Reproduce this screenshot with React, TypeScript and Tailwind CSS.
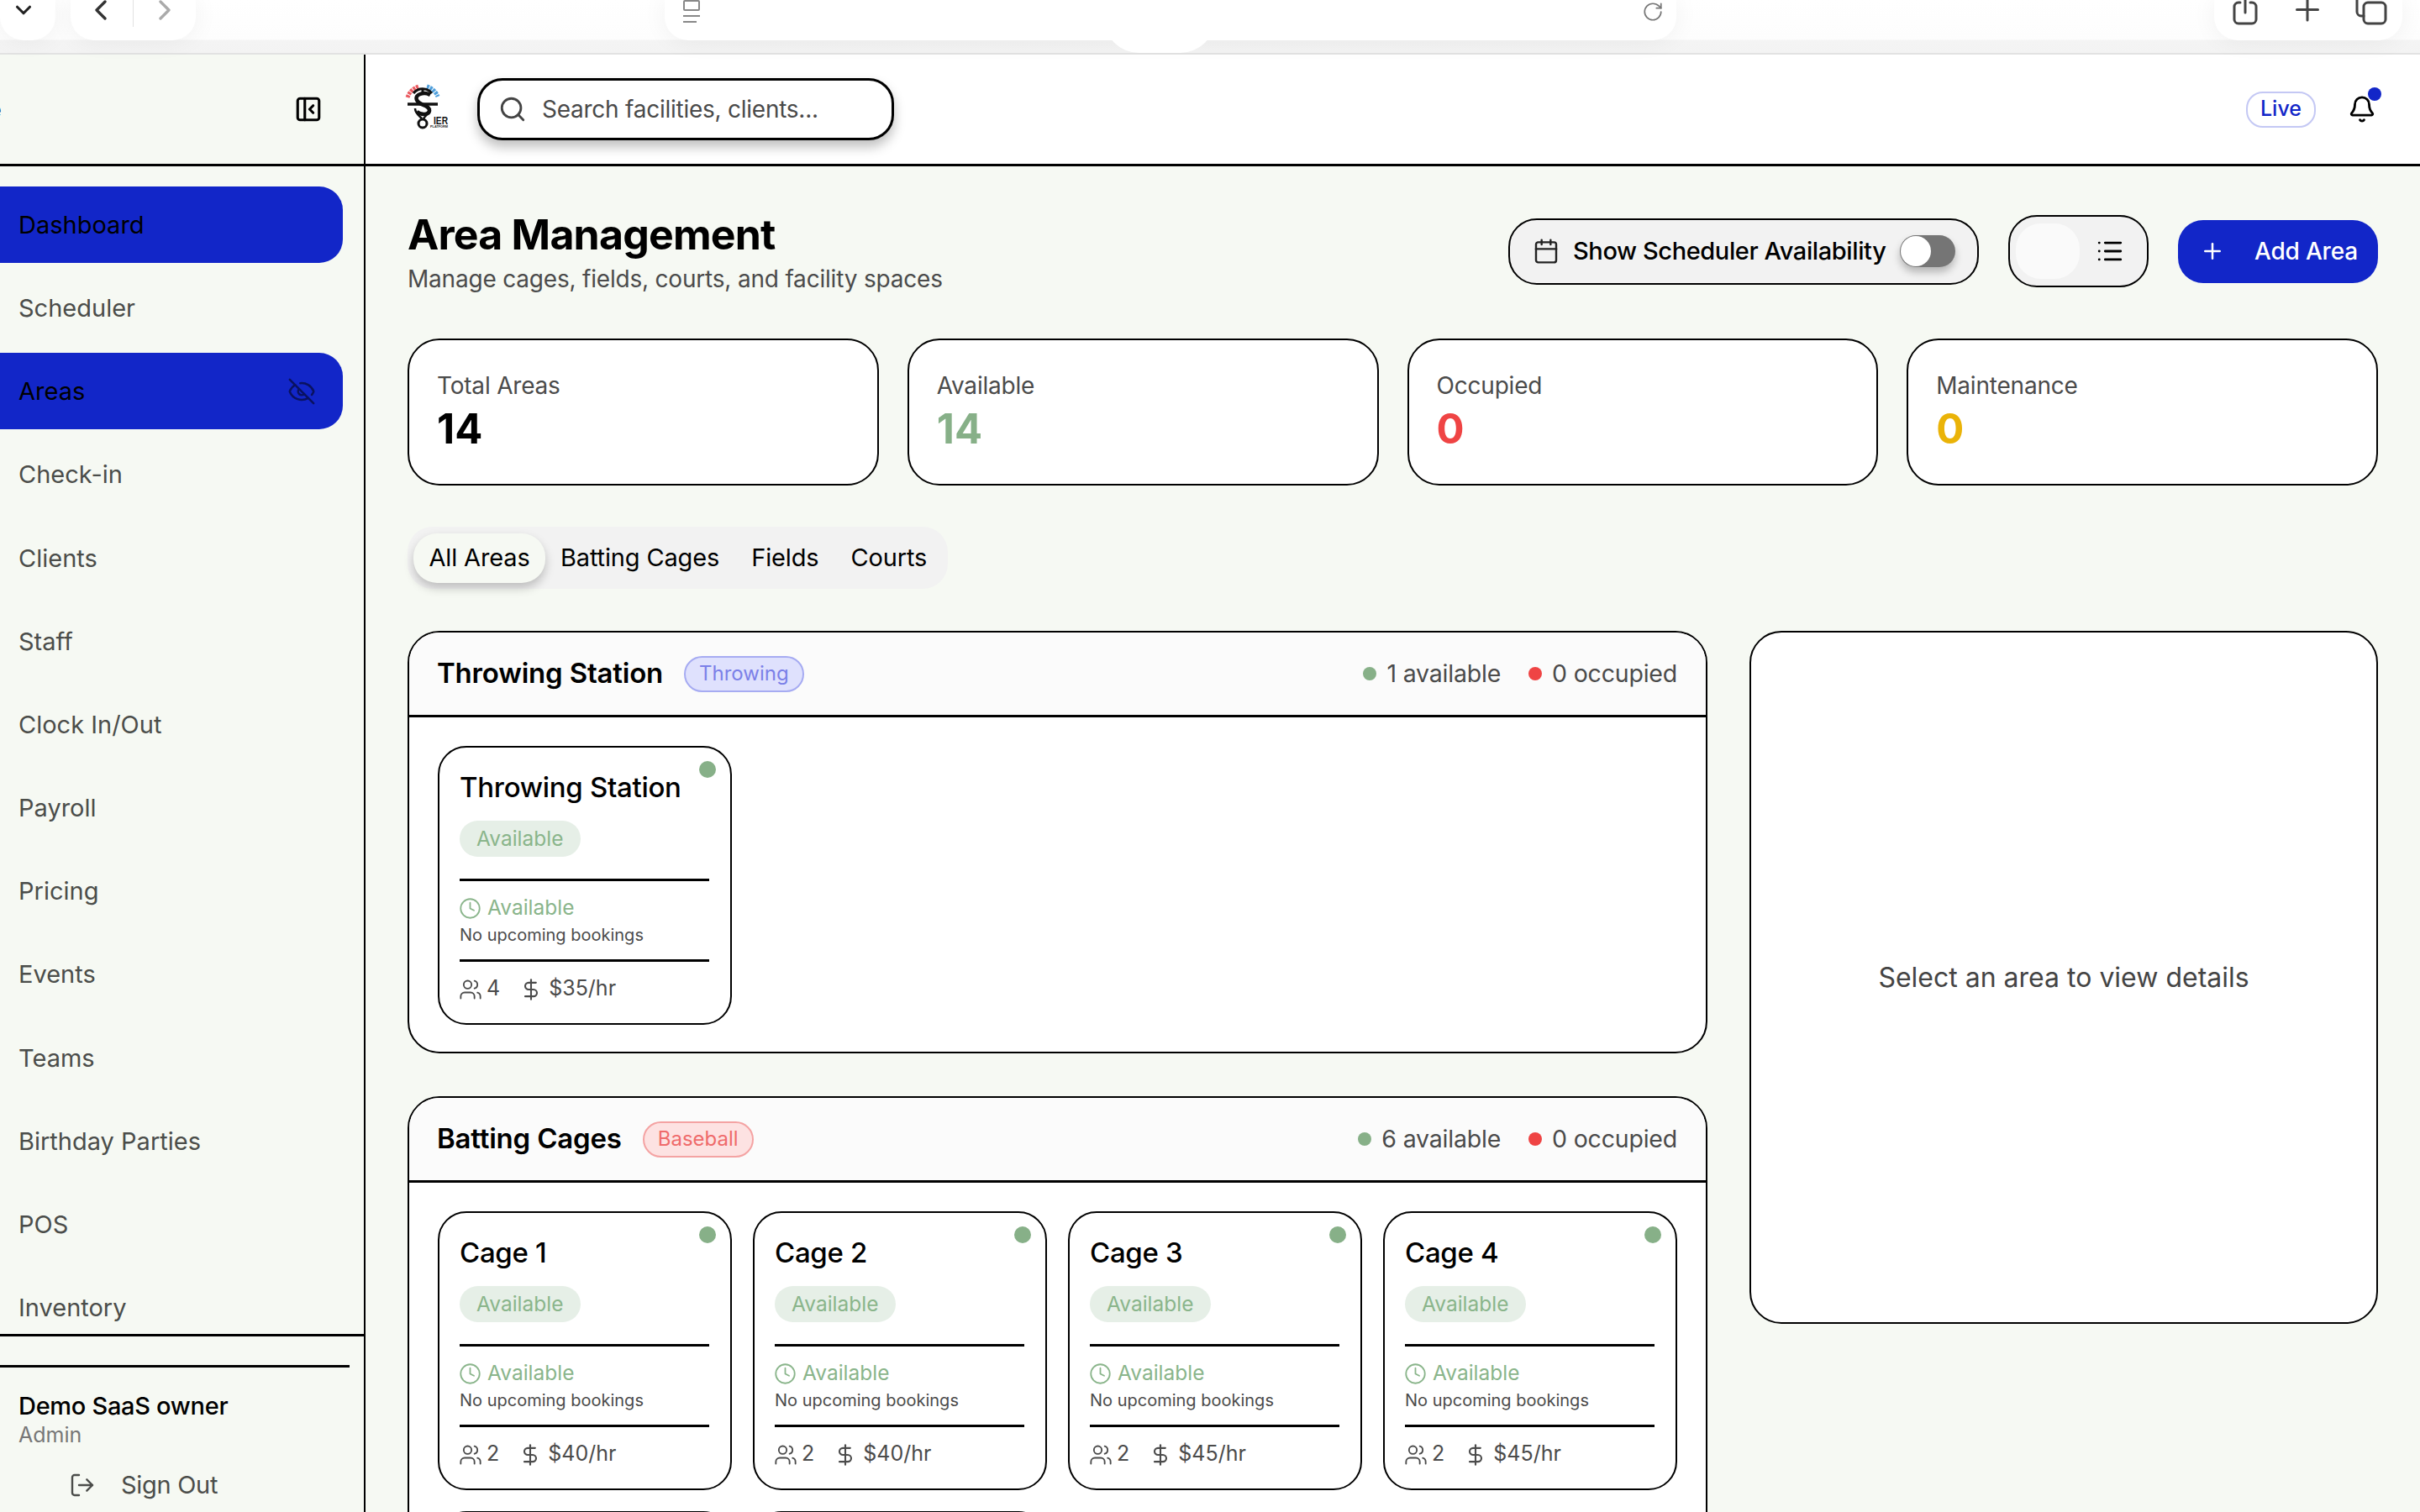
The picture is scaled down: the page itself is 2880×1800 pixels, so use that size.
import React from "react";
import {
  Bell, Calendar, ChevronDown, ChevronLeft, ChevronRight, Clock, DollarSign, EyeOff, List,
  LogOut, PanelLeftClose, Plus, RotateCw, Search, Users,
} from "lucide-react";

const navItems = ["Dashboard", "Scheduler", "Areas", "Check-in", "Clients", "Staff", "Clock In/Out", "Payroll", "Pricing", "Events", "Teams", "Birthday Parties", "POS", "Inventory"];

function Logo() {
  return (
    <svg width="70" height="70" viewBox="0 0 70 70" className="shrink-0 -mt-[12px]">
      <path d="M10 27 A20 20 0 0 1 23 14" fill="none" stroke="#ea5a60" strokeWidth="5" strokeDasharray="3 1" />
      <path d="M33 14 A20 20 0 0 1 46 26" fill="none" stroke="#4f9fdc" strokeWidth="5" strokeDasharray="3 1" />
      <path d="M17 22 A14 14 0 0 1 39 22" fill="none" stroke="#111" strokeWidth="3" />
      <path d="M28 17 V24" stroke="#111" strokeWidth="3" />
      <path d="M10 35 H46" stroke="#111" strokeWidth="3.5" />
      <path d="M37 24 C30 20 18 23 21 30 C24 37 37 36 36 43 C35 48 26 48 21 44" fill="none" stroke="#111" strokeWidth="4.5" />
      <path d="M19 40 C19 46 24 49 27 52 M37 40 C37 45 31 49 29 52" fill="none" stroke="#111" strokeWidth="2.5" />
      <circle cx="28" cy="58" r="5" fill="none" stroke="#111" strokeWidth="3" />
      <text x="41" y="59" fontSize="13" fontWeight="700" fontFamily="Liberation Sans, sans-serif" textLength="17" lengthAdjust="spacingAndGlyphs" fill="#111">IER</text>
      <text x="37" y="63" fontSize="3.5" fontWeight="700" fontFamily="Liberation Sans, sans-serif" textLength="21" lengthAdjust="spacingAndGlyphs" fill="#222">PLATFORM</text>
    </svg>
  );
}

function BrowserBar() {
  const pill = "h-[48px] bg-white rounded-b-[28px] shadow-[0_0_30px_rgba(0,0,0,0.06)] flex items-start relative overflow-hidden";
  return (
    <div className="h-[65px] shrink-0 bg-[linear-gradient(to_bottom,#ffffff_0,#fdfdfd_47px,#f4f4f4_48px,#f3f3f3_100%)] border-b-[2px] border-[#e2e2e2] flex items-start relative">
      <div className={`${pill} w-[66px] justify-end pr-[23px]`}>
        <ChevronDown size={30} strokeWidth={2.5} className="-mt-[3px] text-[#222]" />
      </div>
      <div className={`${pill} ml-[18px] w-[149px]`}>
        <ChevronLeft size={40} strokeWidth={2} className="ml-[16px] -mt-[8px] text-[#333]" />
        <div className="w-[1px] h-[32px] bg-[#e2e2e2] ml-[18px]" />
        <ChevronRight size={40} strokeWidth={2} className="ml-[17px] -mt-[8px] text-[#aaa]" />
      </div>
      <div className={`${pill} ml-[558px] w-[1204px] justify-between`}>
        <div className="ml-[22px] w-[20px] flex flex-col gap-[5px]">
          <div className="w-[20px] h-[13px] border-[2px] border-[#888] rounded-[2px]" />
          <div className="w-[20px] h-[2px] bg-[#888]" />
          <div className="w-[16px] h-[2px] bg-[#888]" />
        </div>
        <RotateCw size={26} strokeWidth={1.6} className="mr-[15px] mt-[1px] text-[#777]" />
      </div>
      <div className={`${pill} ml-[640px] w-[224px] pl-[22px]`}>
        <svg width="30" height="30" viewBox="0 0 30 30" fill="none" stroke="#444" strokeWidth="3" strokeLinecap="round">
          <path d="M9 3 H7 a5 5 0 0 0-5 5 V23 a5 5 0 0 0 5 5 H23 a5 5 0 0 0 5-5 V8 a5 5 0 0 0-5-5 H21" />
          <path d="M15 -3 V15" />
        </svg>
        <svg width="28" height="28" viewBox="0 0 28 28" fill="none" stroke="#444" strokeWidth="3" strokeLinecap="round" className="ml-[45px]">
          <path d="M14 -2 V24 M1.5 11.500 H26.500" />
        </svg>
        <svg width="38" height="30" viewBox="0 0 38 30" fill="none" stroke="#444" strokeWidth="3" strokeLinecap="round" className="ml-[43px]">
          <rect x="10" y="3" width="26" height="25" rx="5" />
          <path d="M2 -2 V14 a5 5 0 0 0 5 5 H10 M2 -2 H30" />
        </svg>
      </div>
      <div className="absolute left-[1313px] top-[20px] w-[134px] h-[43px] bg-white rounded-b-[60px]" />
    </div>
  );
}

function Sidebar() {
  return (
    <aside className="w-[435px] shrink-0 border-r-[2px] border-black flex flex-col overflow-hidden bg-[#f6f9f3]">
      <div className="h-[133px] shrink-0 border-b-[3px] border-black flex items-center justify-between pr-[49px]">
        <span className="-ml-[14px] text-[26px] font-bold text-black">e</span>
        <PanelLeftClose size={34} strokeWidth={2.2} className="text-black" />
      </div>
      <nav className="flex-1 overflow-hidden pt-[24px] border-b-[3px] border-black">
        {navItems.map((name) => {
          const active = name === "Dashboard" || name === "Areas";
          return (
            <div key={name} className={`h-[91px] w-[408px] mb-[8.2px] pl-[22px] pr-[32px] rounded-r-[28px] flex items-center justify-between text-[29px] ${active ? "bg-[#1226c8] text-black" : "text-[#4b4d4a]"}`}>
              <span>{name}</span>
              {name === "Areas" && <EyeOff size={34} strokeWidth={1.8} className="text-[#0a1260]" />}
            </div>
          );
        })}
      </nav>
      <div className="h-[209px] shrink-0 pt-[34px]">
        <div className="h-[3px] w-[416px] bg-black" />
        <div className="pl-[22px] pt-[27px] text-[29px] leading-[38px] font-medium text-black tracking-[-0.3px]">Demo SaaS owner</div>
        <div className="pl-[22px] text-[25px] leading-[30px] text-[#777]">Admin</div>
        <div className="pl-[82px] pt-[23px] flex items-center gap-[30px] text-[#4b4d4a] text-[29px] tracking-[-0.3px]">
          <LogOut size={32} strokeWidth={1.8} />
          <span>Sign Out</span>
        </div>
      </div>
    </aside>
  );
}

function Header() {
  return (
    <header className="h-[133px] shrink-0 bg-white border-b-[3px] border-black flex items-center pl-[40px] pr-[52px]">
      <Logo />
      <div className="ml-[23px] w-[496px] h-[74px] rounded-[30px] border-[3px] border-black bg-white shadow-[0_8px_14px_rgba(0,0,0,0.25)] flex items-center pl-[22px] gap-[18px]">
        <Search size={34} strokeWidth={2} className="text-[#444]" />
        <span className="text-[28px] text-[#4a4a4a] tracking-[-0.25px]">Search facilities, clients...</span>
      </div>
      <div className="ml-auto w-[83px] h-[43px] rounded-[20px] border-[2px] border-[#c4c8f4] flex items-center justify-center text-[25px] font-medium text-[#1226c8]">Live</div>
      <div className="ml-[38px] relative">
        <Bell size={34} strokeWidth={2} className="text-black" />
        <div className="absolute -top-[9px] -right-[6px] w-[16px] h-[16px] rounded-full bg-[#1226c8]" />
      </div>
    </header>
  );
}

function Stat({ label, value, color }: { label: string; value: string; color: string }) {
  return (
    <div className="h-[175px] rounded-[38px] border-[2px] border-black bg-white pl-[33px] pt-[36px]">
      <div className="text-[28px] leading-[36px] text-[#4b4b4b] tracking-[-0.2px]">{label}</div>
      <div className={`text-[49px] leading-[56px] font-bold mt-[6px] ${color}`}>{value}</div>
    </div>
  );
}

function AreaCard({ name, cap, price }: { name: string; cap: string; price: string }) {
  return (
    <div className="relative h-[332px] rounded-[34px] border-[2px] border-black bg-white pl-[24px] pr-[25px] pt-[26px]">
      <div className="absolute top-[16px] right-[17px] w-[20px] h-[20px] rounded-full bg-[#87b088]" />
      <div className="text-[33px] leading-[42px] font-medium text-black tracking-[-0.3px]">{name}</div>
      <div className="mt-[19px] w-fit h-[43px] px-[20px] rounded-[22px] bg-[#e6efe7] flex items-center text-[24.500px] text-[#8ab58b]">Available</div>
      <div className="mt-[26px] h-[3px] bg-black" />
      <div className="mt-[17px] h-[28px] flex items-center gap-[7px] text-[24.500px] text-[#8ab58b]">
        <Clock size={27} strokeWidth={1.6} className="mt-[3px] -ml-[1px]" />
        <span>Available</span>
      </div>
      <div className="mt-[6px] text-[20px] leading-[27px] text-[#4b4b4b]">No upcoming bookings</div>
      <div className="mt-[15px] h-[3px] bg-black" />
      <div className="mt-[15px] flex items-center text-[25px] leading-[30px] text-[#4b4b4b]">
        <Users size={28} strokeWidth={1.6} className="mt-[4px] -ml-[1px]" />
        <span className="ml-[5px]">{cap}</span>
        <DollarSign size={28} strokeWidth={1.8} className="ml-[23px] mt-[4px]" />
        <span className="ml-[7px]">{price}</span>
      </div>
    </div>
  );
}

function Section({ title, tag, tagCls, avail, children }: { title: string; tag: string; tagCls: string; avail: number; children: React.ReactNode }) {
  return (
    <section className="rounded-[38px] border-[2px] border-black bg-white overflow-hidden">
      <div className="h-[101px] bg-[#fbfbfb] border-b-[3px] border-black flex items-center pl-[33px] pr-[34px]">
        <span className="text-[33px] font-semibold text-black tracking-[-0.2px]">{title}</span>
        <span className={`ml-[25px] h-[43px] px-[16px] rounded-[22px] border-[2px] flex items-center text-[24px] ${tagCls}`}>{tag}</span>
        <div className="ml-auto flex items-center text-[28.500px] text-[#4b4b4b] tracking-[-0.2px]">
          <div className="w-[16px] h-[16px] rounded-full bg-[#87b088] mr-[12px]" />
          <span>{avail} available</span>
          <div className="w-[16px] h-[16px] rounded-full bg-[#ef4444] ml-[33px] mr-[12px]" />
          <span>0 occupied</span>
        </div>
      </div>
      {children}
    </section>
  );
}

export default function App() {
  return (
    <div className="w-[2880px] h-[1800px] overflow-hidden flex flex-col bg-[#f6f9f3] font-['Inter',sans-serif]">
      <BrowserBar />
      <div className="flex flex-1 min-h-0">
        <Sidebar />
        <div className="flex-1 min-w-0 flex flex-col overflow-hidden">
          <Header />
          <main className="flex-1 min-h-0 overflow-hidden px-[50px]">
            <div className="flex items-start justify-between h-[205px] pt-[52px]">
              <div>
                <h1 className="text-[50px] leading-[58px] font-bold text-black tracking-[-0.8px]">Area Management</h1>
                <p className="mt-[6px] text-[28px] leading-[36px] text-[#4b4b4b] tracking-[-0.2px]">Manage cages, fields, courts, and facility spaces</p>
              </div>
              <div className="flex items-center gap-[35px] h-[86px] mt-[6px]">
                <div className="w-[560px] h-[79px] rounded-[34px] border-[2px] border-black bg-[#f2f2f2] flex items-center pl-[27px] gap-[16px]">
                  <Calendar size={32} strokeWidth={1.8} className="text-[#222]" />
                  <span className="text-[29px] font-medium text-black tracking-[-0.4px] whitespace-nowrap">Show Scheduler Availability</span>
                  <div className="ml-[1px] w-[66px] h-[38px] rounded-full bg-[#757575] shadow-[0_6px_10px_rgba(0,0,0,0.25)] flex items-center pl-[1px]">
                    <div className="w-[36px] h-[36px] rounded-full bg-white" />
                  </div>
                </div>
                <div className="w-[167px] h-[86px] rounded-[34px] border-[2px] border-black bg-[#f2f2f2] flex items-center pl-[7px] gap-[19px]">
                  <div className="w-[76px] h-[66px] rounded-[30px] bg-[#fafafa]" />
                  <List size={34} strokeWidth={2} className="text-black" />
                </div>
                <div className="w-[238px] h-[75px] rounded-[30px] bg-[#1226c8] flex items-center pl-[26px] gap-[35px] text-white text-[28px] font-medium tracking-[-0.2px]">
                  <Plus size={30} strokeWidth={2} />
                  <span>Add Area</span>
                </div>
              </div>
            </div>
            <div className="grid grid-cols-4 gap-[34px]">
              <Stat label="Total Areas" value="14" color="text-black" />
              <Stat label="Available" value="14" color="text-[#87b088]" />
              <Stat label="Occupied" value="0" color="text-[#ef4444]" />
              <Stat label="Maintenance" value="0" color="text-[#eab308]" />
            </div>
            <div className="mt-[49px] w-[643px] h-[74px] rounded-[30px] bg-[#f2f2f2] flex items-center pl-[7px] text-[29px] text-black tracking-[-0.15px]">
              <div className="w-[157px] h-[59px] rounded-[28px] bg-[#f6f9f3] shadow-[0_6px_12px_rgba(0,0,0,0.22)] flex items-center justify-center">All Areas</div>
              <span className="ml-[18px]">Batting Cages</span>
              <span className="ml-[38px]">Fields</span>
              <span className="ml-[38px]">Courts</span>
            </div>
            <div className="mt-[50px] grid grid-cols-[1547px_748px] gap-[50px] items-start">
              <div className="flex flex-col gap-[51px]">
                <Section title="Throwing Station" tag="Throwing" tagCls="bg-[#dfe1fd] border-[#a6abf2] text-[#7b80e8]" avail={1}>
                  <div className="p-[34px] h-[398px] grid grid-cols-4 gap-[25px]">
                    <AreaCard name="Throwing Station" cap="4" price="$35/hr" />
                  </div>
                </Section>
                <Section title="Batting Cages" tag="Baseball" tagCls="bg-[#fde2e2] border-[#f4a3a3] text-[#ef6b6b]" avail={6}>
                  <div className="p-[34px] grid grid-cols-4 gap-[25px]">
                    <AreaCard name="Cage 1" cap="2" price="$40/hr" />
                    <AreaCard name="Cage 2" cap="2" price="$40/hr" />
                    <AreaCard name="Cage 3" cap="2" price="$45/hr" />
                    <AreaCard name="Cage 4" cap="2" price="$45/hr" />
                    <AreaCard name="Cage 5" cap="2" price="$50/hr" />
                    <AreaCard name="Cage 6" cap="2" price="$50/hr" />
                  </div>
                </Section>
              </div>
              <div className="h-[825px] rounded-[38px] border-[2px] border-black bg-white flex items-center justify-center text-[32px] text-[#444]">
                Select an area to view details
              </div>
            </div>
          </main>
        </div>
      </div>
    </div>
  );
}
